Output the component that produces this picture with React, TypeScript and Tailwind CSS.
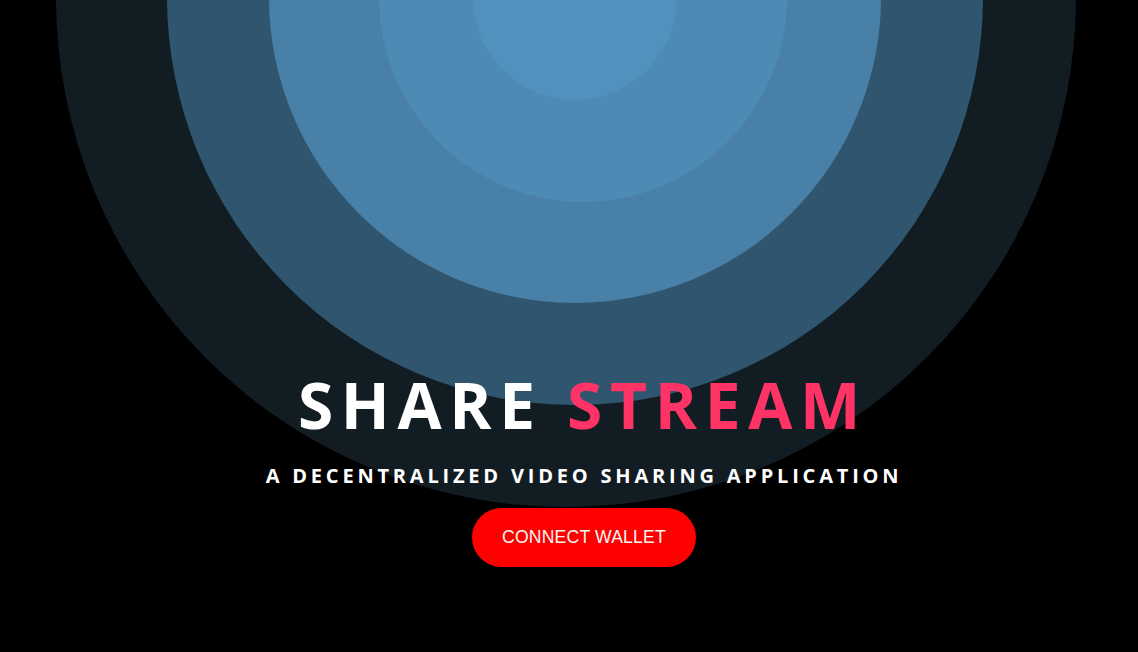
import React from 'react';

const rings = [
  { r: 510, cx: 566, cy: -3, fill: '#121c23' },
  { r: 408, cx: 575, cy: -3, fill: '#30566f' },
  { r: 306, cx: 575, cy: -3, fill: '#4880a8' },
  { r: 204, cx: 583, cy: -2, fill: '#4d8ab4' },
  { r: 102, cx: 575, cy: -2, fill: '#5091bd' },
];

const Backdrop: React.FC = () => (
  <svg className="absolute inset-0 h-full w-full" viewBox="0 0 1138 652" preserveAspectRatio="xMidYMin slice">
    {rings.map(ring => (
      <circle key={ring.r} cx={ring.cx} cy={ring.cy} r={ring.r} fill={ring.fill} />
    ))}
  </svg>
);

const App: React.FC = () => {
  return (
    <div className="relative h-[652px] w-full overflow-hidden bg-black">
      <Backdrop />
      <div className="relative flex h-full flex-col items-center pt-[362px] pl-[28px] font-['Open_Sans',sans-serif]">
        <h1 className="text-[64px] font-bold leading-[86px] tracking-[0.12em] text-white">
          SHARE <span className="text-[#ff3366]">STREAM</span>
        </h1>
        <p className="mt-[14px] ml-[2px] text-[20px] font-bold leading-[28px] tracking-[0.19em] text-white">
          A DECENTRALIZED VIDEO SHARING APPLICATION
        </p>
        <button className="mt-[18px] ml-[2px] h-[59px] w-[224px] rounded-full bg-[#ff0000] font-['Liberation_Sans',sans-serif] text-[17.6px] tracking-[0.01em] text-[#f4f4f4]">
          CONNECT WALLET
        </button>
      </div>
    </div>
  );
};

export default App;
